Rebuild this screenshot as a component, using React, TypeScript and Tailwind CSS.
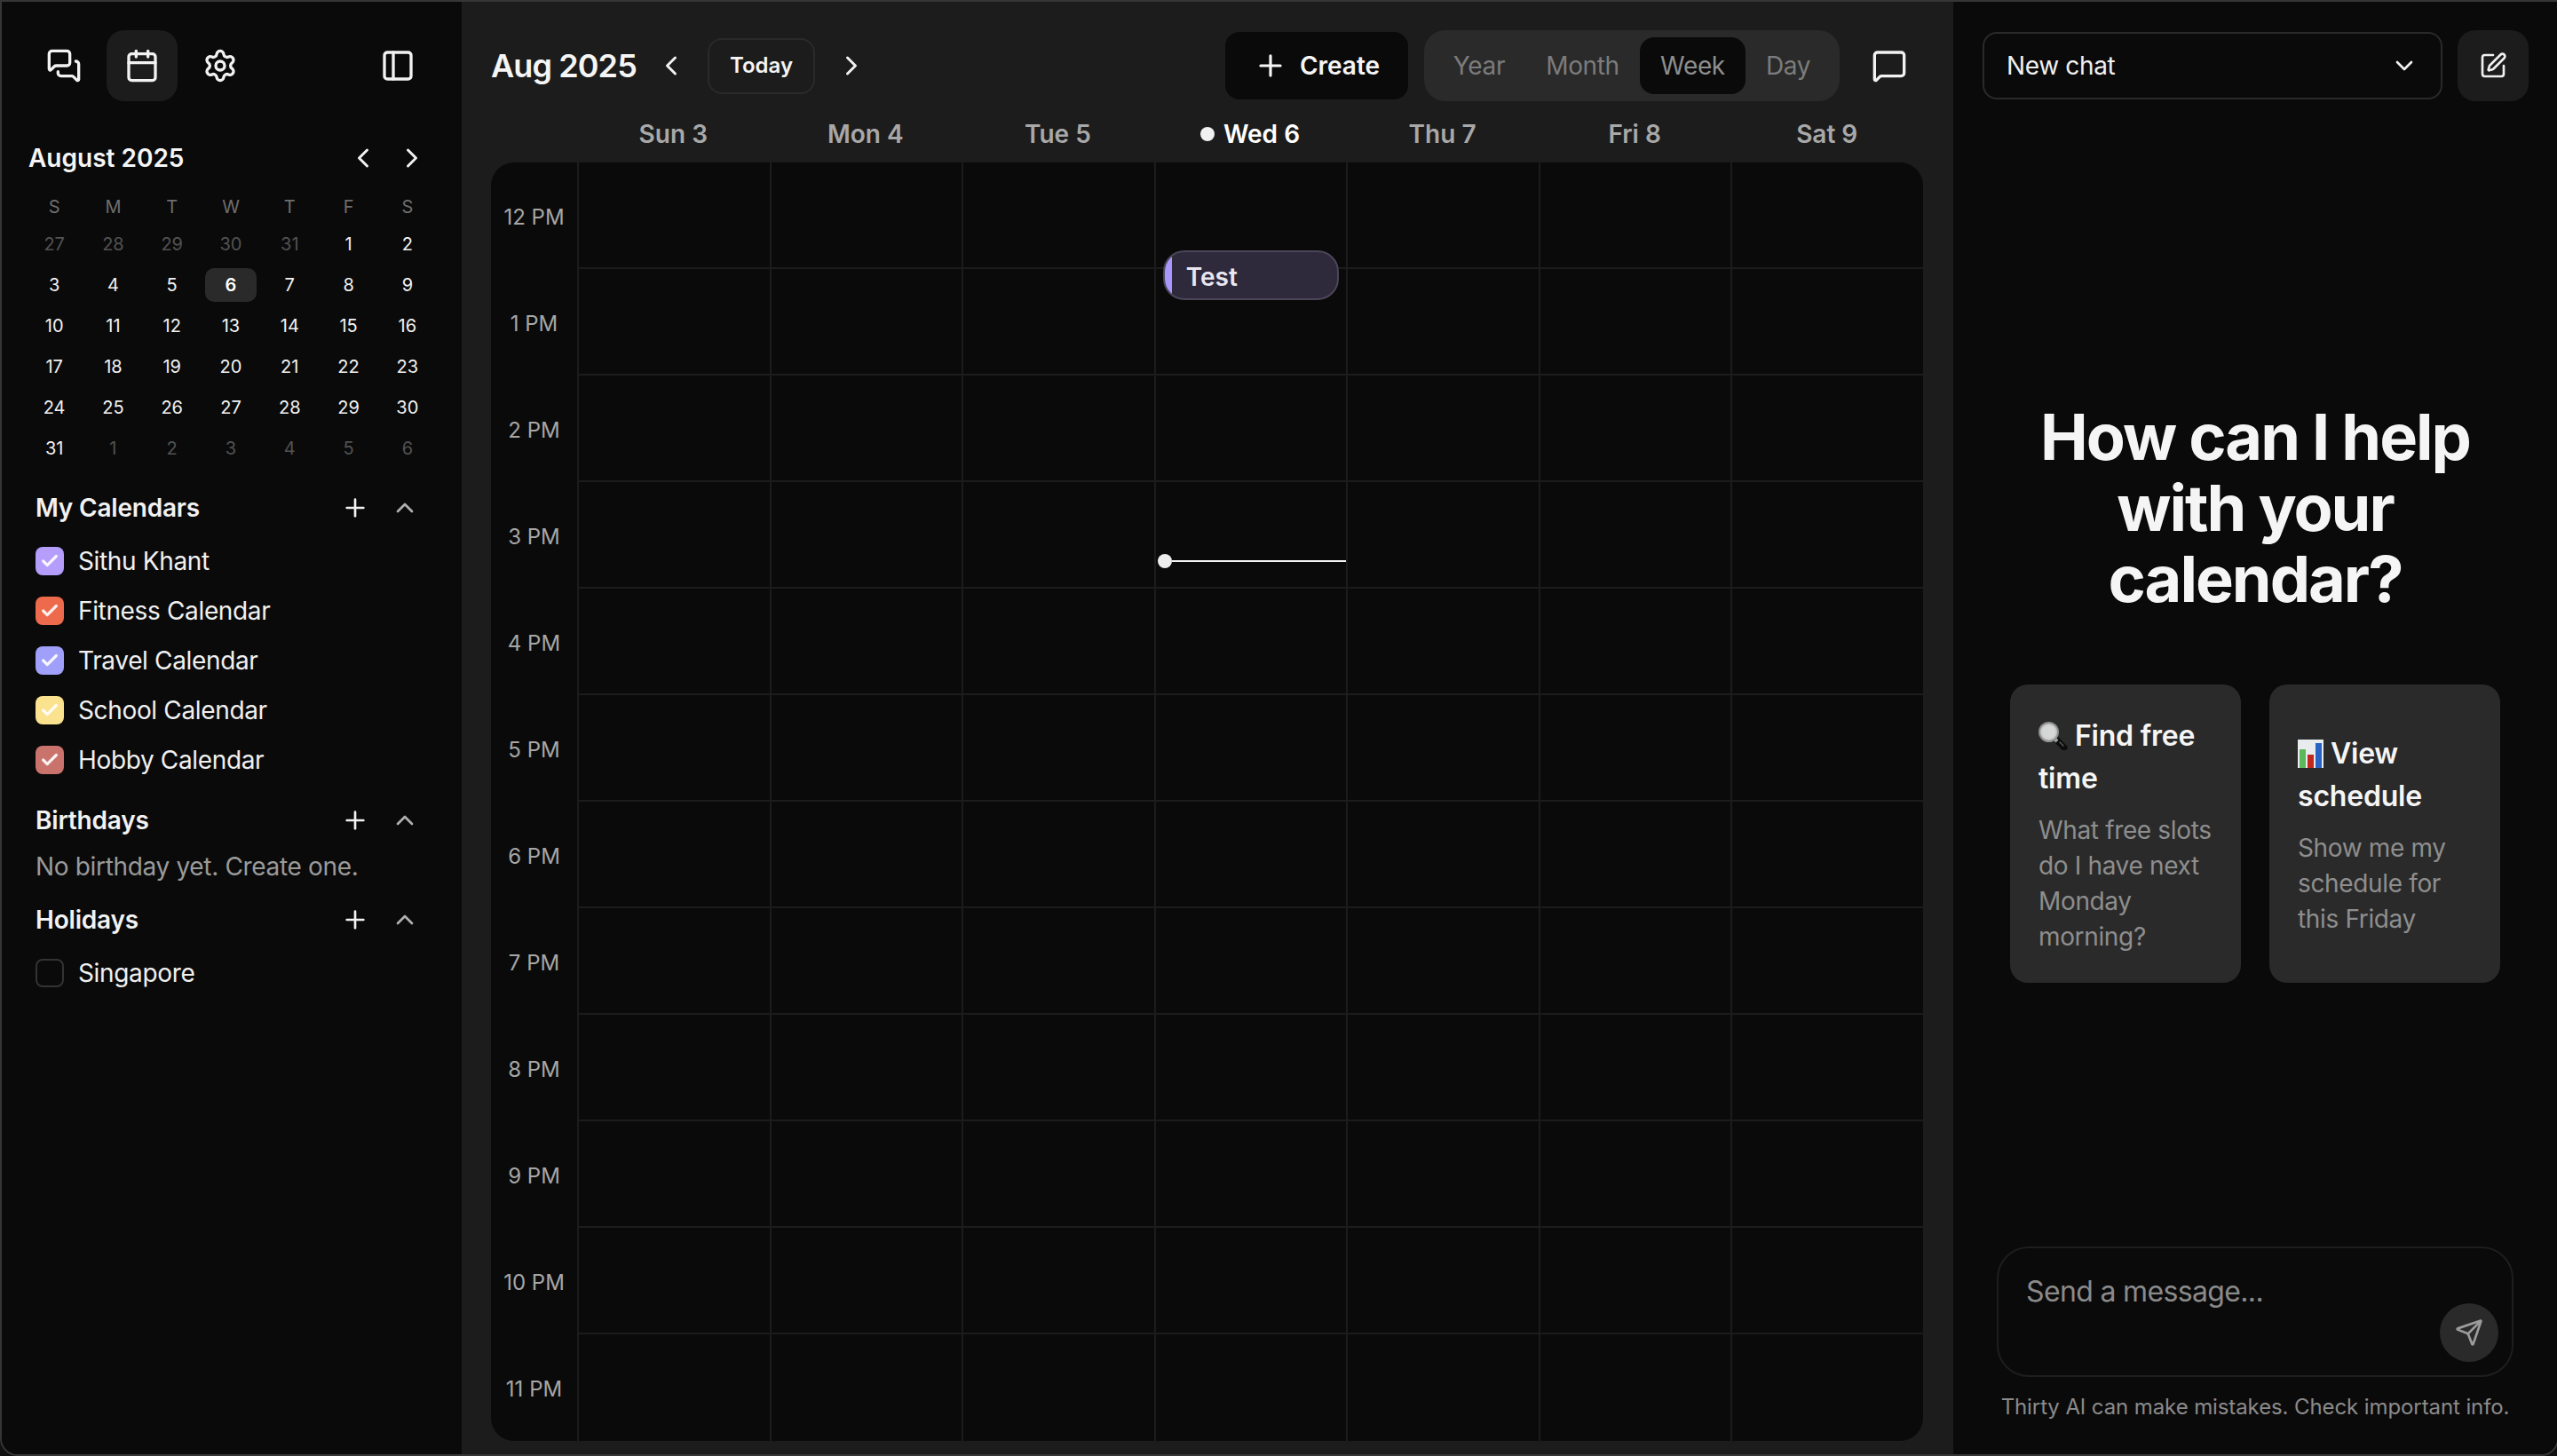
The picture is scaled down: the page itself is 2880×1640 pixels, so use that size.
/**
 * Calendar App
 * Three pane layout: sidebar, week view and chat panel
 */
import React from 'react';
import {
  Calendar,
  Check,
  ChevronDown,
  ChevronLeft,
  ChevronRight,
  ChevronUp,
  MessageSquare,
  MessagesSquare,
  PanelLeft,
  Plus,
  Send,
  Settings,
  SquarePen,
} from 'lucide-react';

const WEEKDAYS = ['S', 'M', 'T', 'W', 'T', 'F', 'S'];
const MINI_DAYS: { day: number; muted?: boolean; today?: boolean }[] = [
  ...[27, 28, 29, 30, 31].map((day) => ({ day, muted: true })),
  ...Array.from({ length: 31 }, (_, i) => ({ day: i + 1, today: i + 1 === 6 })),
  ...[1, 2, 3, 4, 5, 6].map((day) => ({ day, muted: true })),
];
const CALENDARS = [
  { name: 'Sithu Khant', color: 'bg-[#b49dfb]' },
  { name: 'Fitness Calendar', color: 'bg-[#ee6a4d]' },
  { name: 'Travel Calendar', color: 'bg-[#a0a0fb]' },
  { name: 'School Calendar', color: 'bg-[#fbe28e]' },
  { name: 'Hobby Calendar', color: 'bg-[#c9736c]' },
];
const WEEK = ['Sun 3', 'Mon 4', 'Tue 5', 'Wed 6', 'Thu 7', 'Fri 8', 'Sat 9'];
const HOURS = ['12 PM', '1 PM', '2 PM', '3 PM', '4 PM', '5 PM', '6 PM', '7 PM', '8 PM', '9 PM', '10 PM', '11 PM'];
const VIEWS = [
  { label: 'Year', width: 'w-[104px]' },
  { label: 'Month', width: 'w-[129px]' },
  { label: 'Week', width: 'w-[119px]' },
  { label: 'Day', width: 'w-[96px]' },
];

const SectionHeader: React.FC<{ title: string }> = ({ title }) => (
  <div className="flex h-10 w-[436px] items-center justify-between">
    <span className="text-[28px] font-semibold tracking-[-0.2px] text-[#f2f2f2]">{title}</span>
    <div className="flex items-center gap-4">
      <button className="flex h-10 w-10 items-center justify-center text-[#f2f2f2]">
        <Plus size={32} />
      </button>
      <button className="flex h-10 w-10 items-center justify-center text-[#b0b0b0]">
        <ChevronUp size={32} />
      </button>
    </div>
  </div>
);

const CalendarRow: React.FC<{ name: string; color?: string }> = ({ name, color }) => (
  <div className="flex h-14 items-center gap-4">
    {color ? (
      <span className={`flex h-8 w-8 items-center justify-center rounded-lg ${color}`}>
        <Check size={22} strokeWidth={3.5} className="text-white/90" />
      </span>
    ) : (
      <span className="h-8 w-8 rounded-lg border-2 border-[#333333]" />
    )}
    <span className="text-[28px] tracking-[-0.35px] text-[#f0f0f0]">{name}</span>
  </div>
);

const Sidebar: React.FC = () => (
  <aside className="h-full w-[518px] shrink-0 bg-[#0a0a0a]">
    <div className="flex items-center justify-between pt-8 pl-[30px] pr-[32px]">
      <div className="flex gap-2">
        <button className="flex h-20 w-20 items-center justify-center text-[#f2f2f2]">
          <MessagesSquare size={40} />
        </button>
        <button className="flex h-20 w-20 items-center justify-center rounded-[20px] bg-[#1c1c1c] text-[#f2f2f2]">
          <Calendar size={40} />
        </button>
        <button className="flex h-20 w-20 items-center justify-center text-[#f2f2f2]">
          <Settings size={40} />
        </button>
      </div>
      <button className="flex h-20 w-20 items-center justify-center text-[#f2f2f2]">
        <PanelLeft size={40} />
      </button>
    </div>

    <div className="mt-11 flex h-10 items-center justify-between pl-[30px] pr-9">
      <span className="text-[28px] font-semibold text-[#f5f5f5]">August 2025</span>
      <div className="flex gap-[15px]">
        <button className="flex h-10 w-10 items-center justify-center text-[#f2f2f2]">
          <ChevronLeft size={36} />
        </button>
        <button className="flex h-10 w-10 items-center justify-center text-[#f2f2f2]">
          <ChevronRight size={36} />
        </button>
      </div>
    </div>

    <div className="mt-4 ml-[26px] grid w-[464px] grid-cols-7">
      {WEEKDAYS.map((d, i) => (
        <div key={i} className="flex h-[38px] items-center justify-center text-[20px] text-[#6e6e6e]">
          {d}
        </div>
      ))}
      {MINI_DAYS.map((d, i) => (
        <div key={i} className="flex h-[46px] items-center justify-center">
          <span
            className={`flex h-[38px] w-[58px] items-center justify-center rounded-[10px] text-[20px] ${
              d.today
                ? 'bg-[#2a2a2a] font-semibold text-white'
                : d.muted
                  ? 'text-[#525252]'
                  : 'text-[#f2f2f2]'
            }`}
          >
            {d.day}
          </span>
        </div>
      ))}
    </div>

    <div className="pl-[38px]">
      <div className="mt-6">
        <SectionHeader title="My Calendars" />
        <div className="mt-3">
          {CALENDARS.map((c) => (
            <CalendarRow key={c.name} name={c.name} color={c.color} />
          ))}
        </div>
      </div>
      <div className="mt-5">
        <SectionHeader title="Birthdays" />
        <div className="mt-3 text-[28px] leading-10 tracking-[-0.33px] text-[#9a9a9a]">
          No birthday yet. Create one.
        </div>
      </div>
      <div className="mt-5">
        <SectionHeader title="Holidays" />
        <div className="mt-3">
          <CalendarRow name="Singapore" />
        </div>
      </div>
    </div>
  </aside>
);

const WeekView: React.FC = () => (
  <main className="flex h-full w-[1680px] shrink-0 flex-col bg-[#1c1c1c]">
    <header className="flex h-[114px] items-center pt-[30px] pl-[33px] pr-8">
      <h1 className="w-[183px] text-[36px] font-semibold tracking-[-0.9px] text-[#f5f5f5]">Aug 2025</h1>
      <button className="flex h-10 w-10 items-center justify-center text-[#f2f2f2]">
        <ChevronLeft size={36} strokeWidth={2} />
      </button>
      <button className="ml-[21px] flex h-[63px] w-[121px] items-center justify-center rounded-2xl border-2 border-[#2a2a2a] text-[24px] font-semibold text-[#f5f5f5]">
        Today
      </button>
      <button className="ml-[21px] flex h-10 w-10 items-center justify-center text-[#f2f2f2]">
        <ChevronRight size={36} strokeWidth={2} />
      </button>

      <div className="ml-auto flex items-center gap-[18px]">
        <button className="flex h-[76px] w-[206px] items-center justify-center gap-[14px] rounded-2xl bg-[#0a0a0a] text-[28px] font-semibold text-[#f5f5f5]">
          <Plus size={38} />
          Create
        </button>
        <div className="flex h-20 items-center rounded-3xl bg-[#2a2a2a] px-[10px]">
          {VIEWS.map((v) => (
            <span
              key={v.label}
              className={`flex h-16 items-center justify-center rounded-2xl text-[28px] tracking-[-0.35px] ${v.width} ${
                v.label === 'Week' ? 'bg-[#0a0a0a] text-[#8e8e8e]' : 'text-[#7c7c7c]'
              }`}
            >
              {v.label}
            </span>
          ))}
        </div>
      </div>
      <button className="ml-4 flex h-20 w-20 items-center justify-center text-[#f2f2f2]">
        <MessageSquare size={40} />
      </button>
    </header>

    <div className="ml-[130px] mr-[34px] grid h-[67px] grid-cols-7 pt-[3px]">
      {WEEK.map((d) => (
        <div
          key={d}
          className={`flex items-center justify-center gap-[10px] text-[28px] font-semibold ${
            d === 'Wed 6' ? 'text-white' : 'text-[#a8a8a8]'
          }`}
        >
          {d === 'Wed 6' && <span className="h-4 w-4 rounded-full bg-[#f0f0f0]" />}
          {d}
        </div>
      ))}
    </div>

    <div className="ml-[33px] mr-[34px] flex h-[1440px] overflow-hidden rounded-[26px] bg-[#0a0a0a]">
      <div className="w-[97px] shrink-0">
        {HOURS.map((h) => (
          <div key={h} className="flex h-[120px] items-center justify-center pt-[4px] text-[24px] text-[#a6a6a6]">
            {h}
          </div>
        ))}
      </div>
      <div className="grid flex-1 grid-cols-7">
        {HOURS.map((h, row) =>
          WEEK.map((d, col) => (
            <div
              key={`${h}-${d}`}
              className={`relative h-[120px] border-l-2 border-[#1c1c1c] ${row < 11 ? 'border-b-2' : ''}`}
            >
              {row === 0 && col === 3 && (
                <div className="absolute left-[8px] top-[99px] z-10 flex h-14 w-[198px] items-center overflow-hidden rounded-[24px] border-2 border-[#4a4658] bg-[#2e2a3c]">
                  <span className="h-full w-[8px] shrink-0 bg-[#a996fa]" />
                  <span className="ml-[16px] pt-[3px] text-[28px] font-semibold text-[#e8e6ee]">Test</span>
                </div>
              )}
              {row === 3 && col === 3 && (
                <div className="absolute left-[2px] top-[81px] z-10 flex w-[212px] items-center">
                  <span className="h-4 w-4 shrink-0 rounded-full bg-[#eeeeee]" />
                  <span className="h-[2px] flex-1 bg-[#f5f5f5]" />
                </div>
              )}
            </div>
          )),
        )}
      </div>
    </div>
  </main>
);

const SearchEmoji: React.FC = () => (
  <svg width="33" height="32" viewBox="0 0 33 32" className="inline-block align-[-5px]">
    <line x1="21" y1="21" x2="29" y2="29" stroke="#0c0c0c" strokeWidth="7" strokeLinecap="round" />
    <line x1="24" y1="23" x2="28" y2="27" stroke="#5a5a5a" strokeWidth="1.5" strokeLinecap="round" />
    <line x1="17" y1="18" x2="21" y2="22" stroke="#a0a0a0" strokeWidth="4" />
    <circle cx="11.5" cy="11.5" r="10.5" fill="#c8caca" stroke="#8e9090" strokeWidth="2" />
    <circle cx="11.5" cy="11.5" r="7.5" fill="#d6d8d8" />
  </svg>
);

const ChartEmoji: React.FC = () => (
  <svg width="29" height="32" viewBox="0 0 29 32" className="inline-block align-[-5px]">
    <rect x="0" y="0" width="29" height="32" fill="#e9ecef" />
    <rect x="2" y="11" width="7" height="21" fill="#5cb85a" />
    <rect x="11" y="17" width="7" height="15" fill="#c0281e" />
    <rect x="20" y="4" width="7" height="28" fill="#2a62c4" />
  </svg>
);

const PromptCard: React.FC<{ icon: React.ReactNode; title: string; text: string }> = ({ icon, title, text }) => (
  <div className="flex h-[336px] w-[260px] flex-col justify-center rounded-[20px] bg-[#2a2a2a] pl-8 pr-6">
    <div className="pt-[2px] text-[32px] font-semibold leading-[48px] tracking-[-0.2px] text-[#f5f5f5]">
      {icon} {title}
    </div>
    <div className="mt-[14px] text-[28px] leading-10 tracking-[-0.35px] text-[#8e8e8e]">{text}</div>
  </div>
);

const ChatPanel: React.FC = () => (
  <section className="flex h-full flex-1 flex-col bg-[#0a0a0a]">
    <div className="flex h-[114px] items-center gap-[17px] pt-[30px] pl-[33px]">
      <div className="flex h-[76px] w-[518px] items-center justify-between rounded-2xl border-2 border-[#2a2a2a] pl-[25px] pr-[25px]">
        <span className="text-[28px] tracking-[-0.35px] text-[#f0f0f0]">New chat</span>
        <ChevronDown size={32} className="text-[#f0f0f0]" />
      </div>
      <button className="flex h-20 w-20 items-center justify-center rounded-[20px] bg-[#1c1c1c] text-[#f0f0f0]">
        <SquarePen size={32} />
      </button>
    </div>

    <div className="flex flex-1 flex-col items-center pt-[336px]">
      <h2 className="w-[560px] text-center text-[72px] font-bold leading-[80px] tracking-[-2px] text-[#f5f5f5]">
        How can I help with your calendar?
      </h2>
      <div className="mt-[79px] flex gap-8">
        <PromptCard icon={<SearchEmoji />} title="Find free time" text="What free slots do I have next Monday morning?" />
        <PromptCard icon={<ChartEmoji />} title="View schedule" text="Show me my schedule for this Friday" />
      </div>
    </div>

    <div className="relative mx-auto h-[147px] w-[582px] rounded-[36px] border-2 border-[#1e1e1e] pt-[25px] pl-[31px]">
      <div className="text-[32px] leading-[48px] tracking-[-0.65px] text-[#8a8a8a]">Send a message...</div>
      <button className="absolute bottom-[15px] right-[15px] flex h-[66px] w-[66px] items-center justify-center rounded-full bg-[#2a2a2a] text-[#9c9c9c]">
        <Send size={32} />
      </button>
    </div>
    <div className="mt-[18px] mb-[37px] text-center text-[24px] leading-8 tracking-[-0.1px] text-[#8a8a8a]">
      Thirty AI can make mistakes. Check important info.
    </div>
  </section>
);

export default function App() {
  return (
    <div className="h-[1640px] w-[2880px] overflow-hidden bg-[#111111] font-['Inter',sans-serif] antialiased">
      <div className="flex h-full w-[2882px] overflow-hidden rounded-b-[20px] border-2 border-[#363636]">
        <Sidebar />
        <WeekView />
        <ChatPanel />
      </div>
    </div>
  );
}
